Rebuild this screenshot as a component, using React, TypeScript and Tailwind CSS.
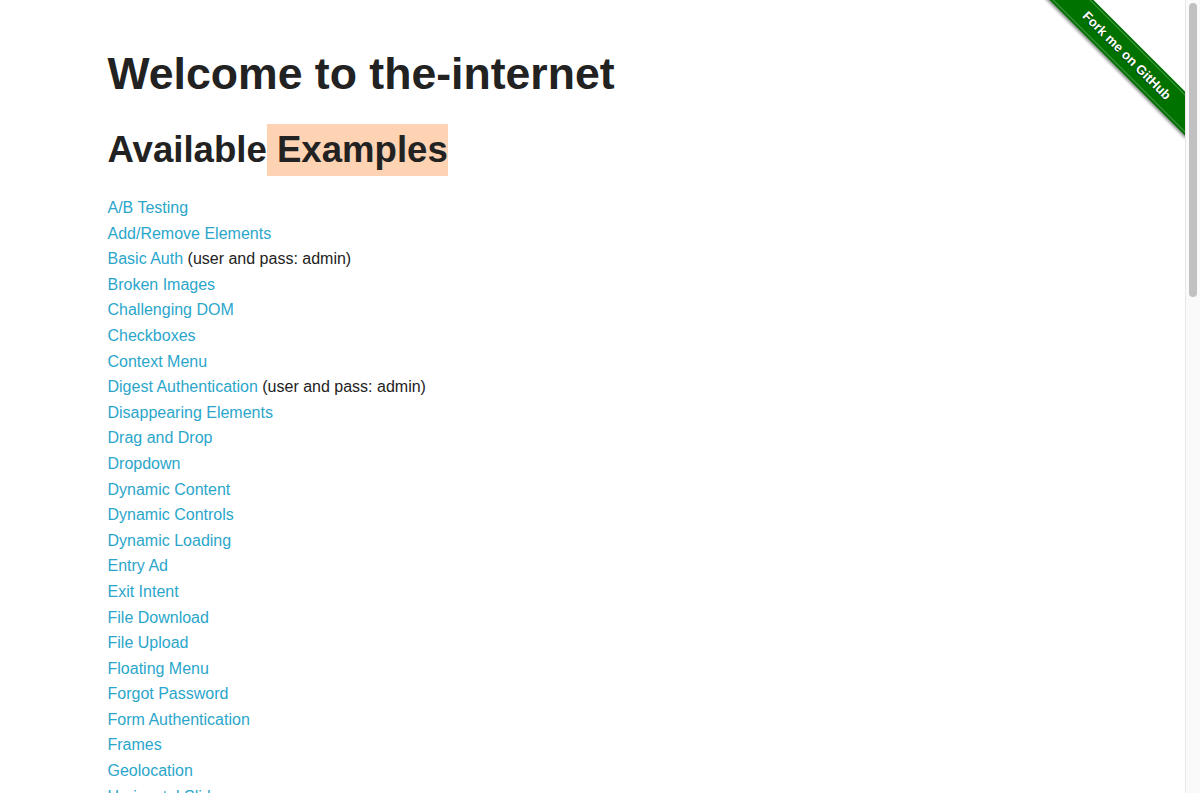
import React from 'react'

type Example = { name: string; note?: string }

const examples: Example[] = [
  { name: 'A/B Testing' },
  { name: 'Add/Remove Elements' },
  { name: 'Basic Auth', note: '(user and pass: admin)' },
  { name: 'Broken Images' },
  { name: 'Challenging DOM' },
  { name: 'Checkboxes' },
  { name: 'Context Menu' },
  { name: 'Digest Authentication', note: '(user and pass: admin)' },
  { name: 'Disappearing Elements' },
  { name: 'Drag and Drop' },
  { name: 'Dropdown' },
  { name: 'Dynamic Content' },
  { name: 'Dynamic Controls' },
  { name: 'Dynamic Loading' },
  { name: 'Entry Ad' },
  { name: 'Exit Intent' },
  { name: 'File Download' },
  { name: 'File Upload' },
  { name: 'Floating Menu' },
  { name: 'Forgot Password' },
  { name: 'Form Authentication' },
  { name: 'Frames' },
  { name: 'Geolocation' },
  { name: 'Horizontal Slider' },
  { name: 'Hovers' },
  { name: 'Infinite Scroll' },
  { name: 'Inputs' },
  { name: 'JQuery UI Menus' },
  { name: 'JavaScript Alerts' },
  { name: 'JavaScript onload event error' },
  { name: 'Key Presses' },
  { name: 'Large & Deep DOM' },
  { name: 'Multiple Windows' },
  { name: 'Nested Frames' },
  { name: 'Notification Messages' },
  { name: 'Redirect Link' },
  { name: 'Secure File Download' },
  { name: 'Shadow DOM' },
  { name: 'Shifting Content' },
  { name: 'Slow Resources' },
  { name: 'Sortable Data Tables' },
  { name: 'Status Codes' },
  { name: 'Typos' },
  { name: 'WYSIWYG Editor' },
]

// green "Fork me on GitHub" corner ribbon
const ForkRibbon = () => {
  return (
    <div className="absolute top-0 right-0 w-[149px] h-[149px] overflow-hidden">
      <a
        href="#"
        className="absolute left-[-9px] top-[40px] w-[200px] h-[31px] rotate-45 bg-[#007200] shadow-[0_2px_3px_rgba(0,0,0,0.45)] flex items-center justify-center"
      >
        <span className="absolute inset-x-0 top-[2px] border-t border-[#4c9a4c]" />
        <span className="absolute inset-x-0 bottom-[2px] border-t border-[#4c9a4c]" />
        <span className="text-white text-[13px] font-bold tracking-[0.1px] [text-shadow:0_1px_1px_rgba(0,0,0,0.5)]">
          Fork me on GitHub
        </span>
      </a>
    </div>
  )
}

const App = () => {
  return (
    <div className="flex h-screen overflow-hidden bg-white text-[#222] font-['Liberation_Sans',Arial,sans-serif]">
      <div className="relative flex-1 overflow-hidden">
        <ForkRibbon />

        <div className="max-w-[1000px] mx-auto px-[15px] pt-[47px]">
          <h1 className="text-[44.6px] leading-[53px] font-bold">Welcome to the-internet</h1>
          <h2 className="mt-[24px] text-[36.6px] leading-[52px] font-bold">
            Available<span className="inline-block bg-[#fdd3b4]">&nbsp;Examples</span>
          </h2>

          <ul className="mt-[19px] text-[16px] leading-[25.6px]">
            {examples.map((ex) => (
              <li key={ex.name}>
                <a href="#" className="text-[#2ba6cb]">
                  {ex.name}
                </a>
                {ex.note && <span> {ex.note}</span>}
              </li>
            ))}
          </ul>

          <div className="w-[333px] mx-auto pt-[20px] pb-[40px]">
            <hr className="border-[#ddd] mb-[20px]" />
            <div className="text-center text-[16px]">
              Powered by{' '}
              <a href="#" className="text-[#2ba6cb]">
                Elemental Selenium
              </a>
            </div>
          </div>
        </div>
      </div>

      {/* scrollbar */}
      <div className="w-[15px] shrink-0 bg-[#fafafa] border-l border-[#e8e8e8] pt-[3px] flex justify-center">
        <div className="w-[8px] h-[294px] rounded-full bg-[#c1c1c1]" />
      </div>
    </div>
  )
}

export default App
